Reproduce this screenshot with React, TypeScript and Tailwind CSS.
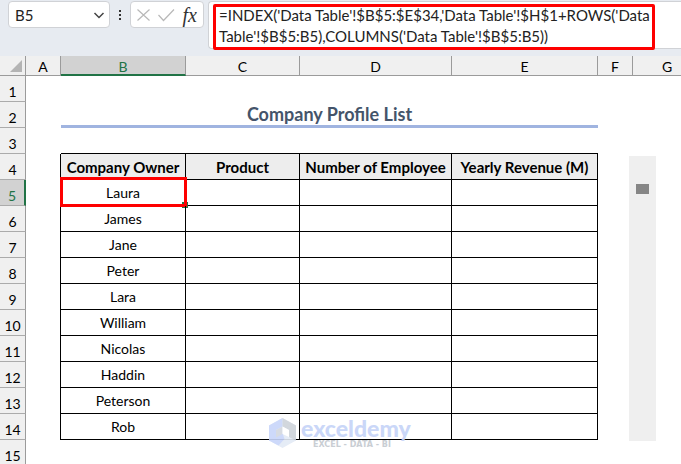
import { useState } from "react";

const COLUMNS = [
    { name: "A", width: "w-[35px]" },
    { name: "B", width: "w-[125px]" },
    { name: "C", width: "w-[114px]" },
    { name: "D", width: "w-[152px]" },
    { name: "E", width: "w-[146px]" },
    { name: "F", width: "w-[35px]" },
    { name: "G", width: "" },
];

const HEADINGS = ["Company Owner", "Product", "Number of Employee", "Yearly Revenue (M)"];

const OWNERS = ["Laura", "James", "Jane", "Peter", "Lara", "William", "Nicolas", "Haddin", "Peterson", "Rob"];

const FORMULA =
    "=INDEX('Data Table'!$B$5:$E$34,'Data Table'!$H$1+ROWS('Data Table'!$B$5:B5),COLUMNS('Data Table'!$B$5:B5))";

function FormulaBar() {
    const [formula, setFormula] = useState(FORMULA);

    return (
        <div className="flex h-14 shrink-0 items-start bg-[#e7ebf1] pt-px pl-2">
            <div className="flex h-[27px] w-[102px] items-center rounded border border-[#d0d2d6] bg-white pr-1 pl-1.5">
                <input
                    aria-label="Name box"
                    defaultValue="B5"
                    className="w-full min-w-0 bg-transparent text-[15px] leading-5 text-[#222] outline-none"
                />
                <button aria-label="Show names" className="shrink-0">
                    <svg width="12" height="8" viewBox="0 0 12 8" fill="none" stroke="#444" strokeWidth="1.5">
                        <path d="M1.500 2 6 6.500 10.500 2" />
                    </svg>
                </button>
            </div>
            <svg className="mt-2 ml-2 shrink-0" width="4" height="13" fill="#333">
                <path d="M1 1h2v2H1zM1 5h2v2H1zM1 9h2v2H1z" />
            </svg>
            <div className="ml-2 flex h-[27px] w-[74px] shrink-0 items-center justify-between rounded border border-[#d0d2d6] bg-white px-1.5">
                <button aria-label="Cancel">
                    <svg width="13" height="14" viewBox="0 0 13 14" fill="none" stroke="#b8b8b8" strokeWidth="1.2">
                        <path d="M.5 1.500l12 11M12.500 1.500l-12 11" />
                    </svg>
                </button>
                <button aria-label="Enter">
                    <svg width="17" height="14" viewBox="0 0 17 14" fill="none" stroke="#b8b8b8" strokeWidth="1.2">
                        <path d="M.5 7l5 5.500L16 1.500" />
                    </svg>
                </button>
                <button
                    aria-label="Insert function"
                    className="font-['Liberation_Serif',serif] text-[20px] leading-5 text-[#333] italic"
                >
                    fx
                </button>
            </div>
            <div className="relative ml-1 flex h-12 min-w-0 flex-1 rounded-l border border-r-0 border-[#d0d2d6] bg-white">
                <textarea
                    aria-label="Formula"
                    value={formula}
                    onChange={(e) => setFormula(e.target.value)}
                    spellCheck={false}
                    className="w-full resize-none overflow-hidden bg-transparent pt-[3px] pr-6 pl-2.5 text-[15px] leading-[21px] text-[#222] outline-none"
                />
                <div className="pointer-events-none absolute top-0.5 right-[26px] -bottom-0.5 left-1 rounded-xs border-3 border-[#fe0000]" />
            </div>
        </div>
    );
}

function RowNumber({ row, active = false }: { row: number; active?: boolean }) {
    return (
        <th
            scope="row"
            className={
                active
                    ? "h-[26px] border-r-2 border-b border-r-[#217346] border-b-[#ababab] bg-[#d2d2d2] pt-1.5 font-normal text-[#217346]"
                    : "h-[26px] border-r border-b border-r-[#9b9b9b] border-b-[#ababab] bg-[#f0f0f0] pt-1.5 font-normal"
            }
        >
            {row}
        </th>
    );
}

function EmptyRow({ row }: { row: number }) {
    return (
        <tr>
            <RowNumber row={row} />
            <td colSpan={7} />
        </tr>
    );
}

function columnHeaderClass(name: string) {
    if (name === "B") {
        return "h-5 border-r border-b-2 border-r-[#9b9b9b] border-b-[#217346] bg-[#d2d2d2] pt-0.5 text-[#217346]";
    }
    // G runs past the window edge, so its label sits right of centre
    if (name === "G") {
        return "h-5 border-b border-[#9b9b9b] bg-[#f0f0f0] pt-0.5 pl-5";
    }
    return "h-5 border-r border-b border-[#9b9b9b] bg-[#f0f0f0] pt-0.5";
}

function Sheet() {
    return (
        <table className="w-full table-fixed border-separate border-spacing-0 text-center text-[14px] leading-[18px]">
            <thead>
                <tr>
                    <th className="h-5 w-[26px] border-r border-b border-[#9b9b9b] bg-[#f0f0f0]">
                        <svg className="ml-2.5" width="12" height="12" fill="#b4b4b4">
                            <path d="M12 0v12H0z" />
                        </svg>
                    </th>
                    {COLUMNS.map((column) => (
                        <th key={column.name} scope="col" className={`h-5 p-0 font-normal ${column.width}`}>
                            <div className={columnHeaderClass(column.name)}>{column.name}</div>
                        </th>
                    ))}
                </tr>
            </thead>
            <tbody>
                <EmptyRow row={1} />
                <tr>
                    <RowNumber row={2} />
                    <td />
                    <td
                        colSpan={4}
                        className="border-b-3 border-[#a0b4e0] p-0 text-[18px] leading-5 font-bold text-[#44546a]"
                    >
                        Company Profile List
                    </td>
                    <td colSpan={2} />
                </tr>
                <tr>
                    <RowNumber row={3} />
                    <td />
                    <td colSpan={4} className="border-b border-black" />
                    <td colSpan={2} />
                </tr>
                <tr>
                    <RowNumber row={4} />
                    <td className="border-r border-black" />
                    {HEADINGS.map((heading) => (
                        <th
                            key={heading}
                            scope="col"
                            className="border-r border-b border-black bg-[#ededed] p-0 text-[15px] font-bold whitespace-nowrap"
                        >
                            {heading}
                        </th>
                    ))}
                    <td colSpan={2} />
                </tr>
                {OWNERS.map((owner, i) => (
                    <tr key={owner}>
                        <RowNumber row={i + 5} active={i === 0} />
                        <td className="border-r border-black" />
                        <td className="relative border-r border-b border-black p-0">
                            {owner}
                            {i === 0 && (
                                <>
                                    <div className="absolute -right-[3px] -bottom-[3px] size-1.5 bg-[#217346]" />
                                    <div className="absolute -top-[3px] -right-0.5 -bottom-0.5 -left-px border-3 border-[#fe0000]" />
                                </>
                            )}
                        </td>
                        <td className="border-r border-b border-black" />
                        <td className="border-r border-b border-black" />
                        <td className="border-r border-b border-black" />
                        <td colSpan={2} />
                    </tr>
                ))}
                <EmptyRow row={15} />
            </tbody>
        </table>
    );
}

function Watermark() {
    return (
        <div className="pointer-events-none absolute top-[359px] left-[268px] flex items-start gap-1 opacity-90">
            <svg className="mt-0.5" width="29" height="32" viewBox="0 0 29 32">
                <path d="M14.500 1 28 8.500v15L14.500 31 1 23.500v-15z" fill="#e3eaf6" />
                <path d="M14.500 1v8.500L8 13v8l-7 3V8.500z" fill="#c8d5fa" />
                <path d="M1 23.500 14.500 16l2 6-6 6.500z" fill="#c8d5fa" />
                <path d="M14.500 1 28 8.500v15l-7-3.500v-7l-6.500-3.500z" fill="#ced3da" />
                <path d="M8 13l6.500-3.500V17L8 20.500z" fill="#d3d8df" />
                <path d="M14.500 9.500 21 13v7l-6.500-3z" fill="#fff" />
            </svg>
            <div>
                <div className="text-[23px] leading-[26px] font-black text-[#c5d3f8]">exceldemy</div>
                <div className="pl-3 font-['DejaVu_Sans',sans-serif] text-[8px] leading-2 font-bold text-[#c4c9cf]">
                    EXCEL - DATA - BI
                </div>
            </div>
        </div>
    );
}

export default function App() {
    return (
        <main className="flex h-screen flex-col overflow-hidden bg-white font-[Lato,sans-serif] text-black">
            <FormulaBar />
            <div className="relative">
                <Sheet />
                <input
                    type="range"
                    aria-label="Scroll list"
                    min={0}
                    max={30}
                    defaultValue={3}
                    className="absolute top-[100px] left-[629px] h-[285px] w-[27px] appearance-none bg-[#efefef] [writing-mode:vertical-lr] [&::-webkit-slider-thumb]:h-2.5 [&::-webkit-slider-thumb]:w-[13px] [&::-webkit-slider-thumb]:appearance-none [&::-webkit-slider-thumb]:bg-[#868686]"
                />
                <Watermark />
            </div>
        </main>
    );
}
